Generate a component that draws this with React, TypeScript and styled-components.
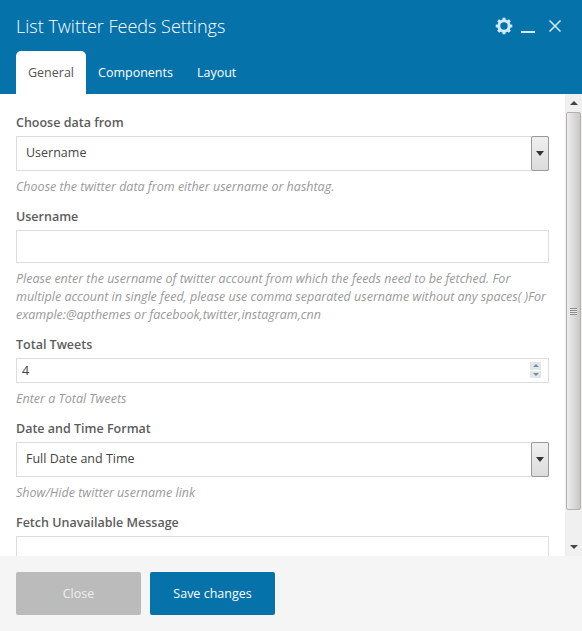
import React from 'react'
import styled, { createGlobalStyle } from 'styled-components'
import { X } from 'lucide-react'

const GlobalStyle = createGlobalStyle`
    html, body {
        margin: 0;
        padding: 0;
        background: #fff;
    }
    * {
        box-sizing: border-box;
    }
`

const Modal = styled.div`
    width: 582px;
    height: 631px;
    display: flex;
    flex-direction: column;
    overflow: hidden;
    font-family: "Open Sans", sans-serif;
    font-size: 12.5px;
    color: #555;
`

const Header = styled.header`
    background: #0572aa;
    height: 94px;
    flex: none;
    padding: 0 16px;
    display: flex;
    flex-direction: column;
    justify-content: space-between;
`

const TitleRow = styled.div`
    display: flex;
    justify-content: space-between;
    align-items: center;
    height: 51px;
    padding-top: 1px;
`

const Title = styled.h4`
    margin: 0;
    font-size: 18px;
    font-weight: 300;
    color: #fff;
    line-height: 25px;
`

const Actions = styled.div`
    display: flex;
    align-items: center;
    color: #cfeaf8;
    margin-right: 1px;
`

const Underscore = styled.span`
    width: 14px;
    height: 2px;
    background: #cfeaf8;
    margin: 0 10px 0 8px;
    transform: translateY(6px);
`

const Tabs = styled.nav`
    display: flex;
    height: 43px;
`

const Tab = styled.a<{ $active?: boolean }>`
    padding: 0 12px 1px;
    display: flex;
    align-items: center;
    height: 43px;
    font-size: 12.5px;
    cursor: pointer;
    border-radius: 5px 5px 0 0;
    color: ${p => (p.$active ? '#555' : '#fff')};
    background: ${p => (p.$active ? '#fff' : 'transparent')};
`

const Main = styled.div`
    flex: 1;
    display: flex;
    min-height: 0;
`

const Form = styled.div`
    flex: 1;
    padding: 20px 16px 0;
    overflow: hidden;
`

const Field = styled.div`
    margin-bottom: 12px;
`

const Label = styled.label`
    display: block;
    font-size: 12.5px;
    font-weight: 600;
    line-height: 18px;
    color: #5c5c5c;
    margin-bottom: 4px;
`

const Help = styled.p`
    margin: 7px 0 0;
    font-size: 12.5px;
    font-style: italic;
    line-height: 18px;
    color: #999;
`

const SelectBox = styled.div`
    height: 35px;
    border: 1px solid #ddd;
    display: flex;
    align-items: center;
    justify-content: space-between;
    padding-left: 9px;
    font-size: 12.5px;
    color: #444;
    background: #fff;
`

const SelectText = styled.span`
    padding-bottom: 3px;
`

const SelectButton = styled.span`
    width: 18px;
    height: 35px;
    margin-right: -1px;
    border: 1px solid #999;
    border-radius: 2px;
    background: linear-gradient(#f0f0f0, #dcdcdc);
    display: flex;
    align-items: center;
    justify-content: center;
    &::after {
        content: '';
        border-left: 4px solid transparent;
        border-right: 4px solid transparent;
        border-top: 5px solid #333;
    }
`

const TextBox = styled.div`
    height: 33px;
    border: 1px solid #ddd;
    background: #fff;
`

const NumberBox = styled.div`
    height: 25px;
    border: 1px solid #ddd;
    display: flex;
    align-items: center;
    justify-content: space-between;
    padding: 0 7px 1px 5px;
    font-size: 12.5px;
    color: #444;
`

const Spinner = styled.span`
    width: 11px;
    height: 16px;
    display: flex;
    flex-direction: column;
    gap: 1px;
`

const SpinPart = styled.span<{ $up?: boolean }>`
    flex: 1;
    background: #e3e6e8;
    display: flex;
    align-items: center;
    justify-content: center;
    &::after {
        content: '';
        border-left: 3px solid transparent;
        border-right: 3px solid transparent;
        ${p => (p.$up ? 'border-bottom: 3px solid #6f8fa3;' : 'border-top: 3px solid #6f8fa3;')}
    }
`

const ScrollBar = styled.div`
    width: 17px;
    flex: none;
    background: #f0f0f0;
    display: flex;
    flex-direction: column;
`

const ScrollArrow = styled.span<{ $up?: boolean }>`
    height: 18px;
    flex: none;
    display: flex;
    align-items: center;
    justify-content: center;
    &::after {
        content: '';
        border-left: 4px solid transparent;
        border-right: 4px solid transparent;
        ${p => (p.$up ? 'border-bottom: 4px solid #444;' : 'border-top: 4px solid #444;')}
    }
`

const ScrollThumb = styled.div`
    height: 398px;
    margin: 0 1px;
    flex: none;
    border: 1px solid #b5b0b0;
    border-radius: 2px;
    background: linear-gradient(90deg, #ededed, #c9c9c9);
    display: flex;
    align-items: center;
    justify-content: center;
`

const Grip = styled.span`
    width: 7px;
    height: 7px;
    background: repeating-linear-gradient(#8c8c8c 0 1px, #e8e8e8 1px 2px);
`

const ScrollTrack = styled.div`
    flex: 1;
`

const Footer = styled.footer`
    height: 75px;
    flex: none;
    background: #f5f5f5;
    padding: 16px 16px 0;
    display: flex;
    gap: 9px;
    align-items: flex-start;
`

const Button = styled.button<{ $primary?: boolean }>`
    width: 125px;
    height: 43px;
    border: none;
    border-radius: 2px;
    font-family: "Open Sans", sans-serif;
    font-size: 12.5px;
    color: ${p => (p.$primary ? '#fff' : '#eee')};
    cursor: pointer;
    background: ${p => (p.$primary ? '#0572aa' : '#bbb')};
`

const Gear = () => (
    <svg width="18" height="18" viewBox="0 0 20 20" fill="none">
        <circle cx="10" cy="10" r="5.8" stroke="#cfeaf8" strokeWidth="3.4" />
        {[0, 45, 90, 135, 180, 225, 270, 315].map(a => (
            <rect key={a} x="8.4" y="0.8" width="3.2" height="3" fill="#cfeaf8" transform={`rotate(${a} 10 10)`} />
        ))}
    </svg>
)

export default function App() {
    return (
        <Modal>
            <GlobalStyle />
            <Header>
                <TitleRow>
                    <Title>List Twitter Feeds Settings</Title>
                    <Actions>
                        <Gear />
                        <Underscore />
                        <X size={20} strokeWidth={2} />
                    </Actions>
                </TitleRow>
                <Tabs>
                    <Tab $active>General</Tab>
                    <Tab>Components</Tab>
                    <Tab>Layout</Tab>
                </Tabs>
            </Header>
            <Main>
                <Form>
                    <Field>
                        <Label>Choose data from</Label>
                        <SelectBox><SelectText>Username</SelectText><SelectButton /></SelectBox>
                        <Help>Choose the twitter data from either username or hashtag.</Help>
                    </Field>
                    <Field>
                        <Label>Username</Label>
                        <TextBox />
                        <Help>Please enter the username of twitter account from which the feeds need to be fetched. For multiple account in single feed, please use comma separated username without any spaces( )For example:@apthemes or facebook,twitter,instagram,cnn</Help>
                    </Field>
                    <Field>
                        <Label>Total Tweets</Label>
                        <NumberBox>
                            4
                            <Spinner><SpinPart $up /><SpinPart /></Spinner>
                        </NumberBox>
                        <Help>Enter a Total Tweets</Help>
                    </Field>
                    <Field>
                        <Label>Date and Time Format</Label>
                        <SelectBox><SelectText>Full Date and Time</SelectText><SelectButton /></SelectBox>
                        <Help>Show/Hide twitter username link</Help>
                    </Field>
                    <Field>
                        <Label>Fetch Unavailable Message</Label>
                        <TextBox />
                    </Field>
                </Form>
                <ScrollBar>
                    <ScrollArrow $up />
                    <ScrollThumb><Grip /></ScrollThumb>
                    <ScrollTrack />
                    <ScrollArrow />
                </ScrollBar>
            </Main>
            <Footer>
                <Button>Close</Button>
                <Button $primary>Save changes</Button>
            </Footer>
        </Modal>
    )
}
